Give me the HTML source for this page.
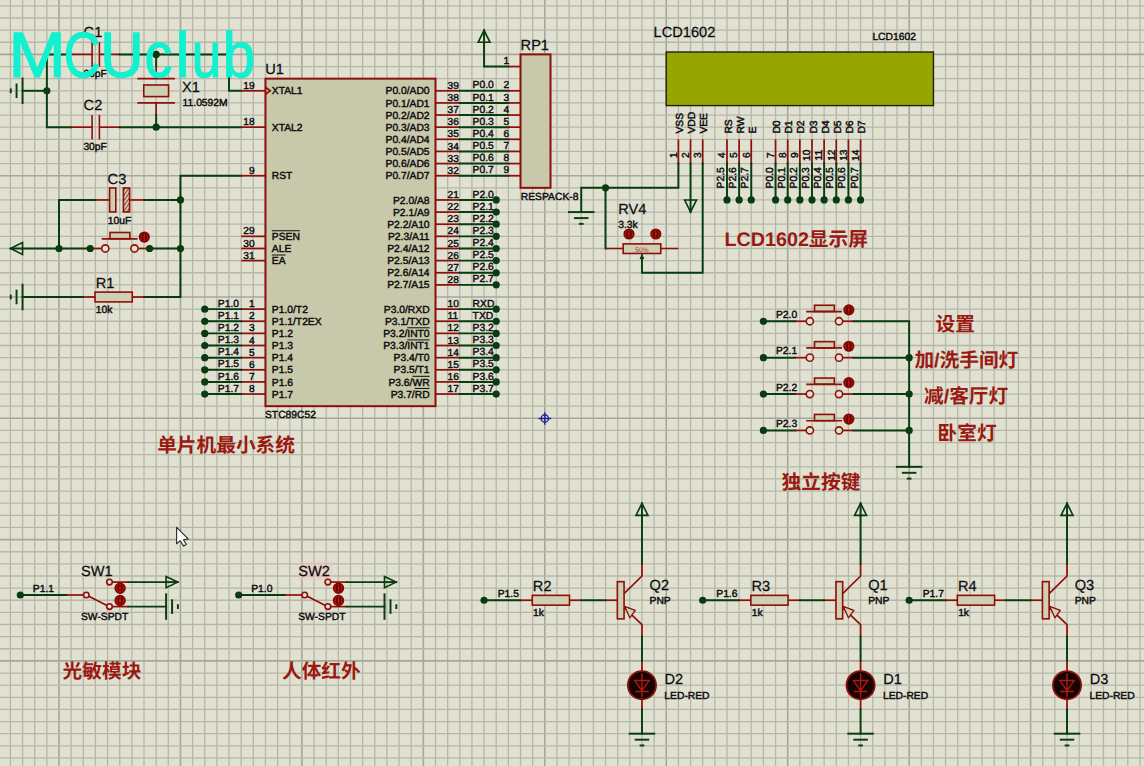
<!DOCTYPE html>
<html lang="zh"><head><meta charset="utf-8"><title>MCU schematic</title>
<style>
html,body{margin:0;padding:0;background:#E1E1D2;overflow:hidden}
svg{display:block}
text{font-family:'Liberation Sans', 'Noto Sans CJK SC', sans-serif;fill:#0c0c0c;stroke:#0c0c0c;stroke-width:.42px;text-rendering:geometricPrecision}
.gm{stroke:#B7B7A9;stroke-width:1.3}
.gM{stroke:#A6A69A;stroke-width:1.6}
.w{stroke:#063C0E;stroke-width:1.95;fill:none;stroke-linejoin:miter;stroke-linecap:square}
.p{stroke:#8E0E08;stroke-width:1.7;fill:none}
.p2{stroke:#8E0E08;stroke-width:1.6;fill:none}
.ol{stroke:#0c0c0c;stroke-width:1}
.d{fill:#0A3A10}
.b{fill:#C8C8AA;stroke:#8E0E08;stroke-width:2}
.r{fill:#CFCFB4;stroke:#8E0E08;stroke-width:1.6}
.hatch{fill:url(#hat);stroke:#8E0E08;stroke-width:1.6}
.lcd{fill:#96A500;stroke:#20200c;stroke-width:1.4}
.tri{fill:none;stroke:#063C0E;stroke-width:1.6;stroke-linejoin:miter}
.oc{fill:#E1E1D2;stroke:#8E0E08;stroke-width:1.6}
.ind{fill:#CC140A;stroke:#7a0804;stroke-width:1.8}
.indm{stroke:#560503;stroke-width:1.9;fill:none;stroke-linecap:round}
.led{fill:#160404;stroke:#8A120C;stroke-width:1.8}
.ledm{stroke:#B01A10;stroke-width:1.4;fill:none}
.ah{fill:#CFCFB4;stroke:#8E0E08;stroke-width:1.3;stroke-linejoin:round}
.hl{fill:#f0c8c0;opacity:.45}
.s{font-size:10.3px}
.n{font-size:10.2px}
.g{font-size:14.6px;stroke-width:.25px}
.pct{font-size:6.6px;fill:#b03020;stroke:none}
.c{font-size:19.7px;font-weight:bold;fill:#9A1A12;stroke:none}
.wm text{font-size:64px;fill:#12F1CF;stroke:#12F1CF;stroke-width:1.2px;vector-effect:non-scaling-stroke;stroke-linejoin:round;stroke-linecap:round}
</style></head>
<body>
<svg width="1144" height="766" viewBox="0 0 1144 766">
<defs><pattern id="hat" width="3" height="3" patternUnits="userSpaceOnUse" patternTransform="rotate(-55)"><rect width="3" height="3" fill="#CFCFB4"/><line x1="0" y1="0" x2="3" y2="0" stroke="#8E0E08" stroke-width="1.6"/></pattern></defs>
<rect width="1144" height="766" fill="#E1E1D2"/>
<g opacity="0.999">
<g id="grid"><line class="gm" x1="10.42" y1="0" x2="10.42" y2="766"/><line class="gm" x1="22.56" y1="0" x2="22.56" y2="766"/><line class="gm" x1="34.71" y1="0" x2="34.71" y2="766"/><line class="gm" x1="46.86" y1="0" x2="46.86" y2="766"/><line class="gM" x1="59" y1="0" x2="59" y2="766"/><line class="gm" x1="71.14" y1="0" x2="71.14" y2="766"/><line class="gm" x1="83.29" y1="0" x2="83.29" y2="766"/><line class="gm" x1="95.44" y1="0" x2="95.44" y2="766"/><line class="gm" x1="107.58" y1="0" x2="107.58" y2="766"/><line class="gm" x1="119.72" y1="0" x2="119.72" y2="766"/><line class="gm" x1="131.87" y1="0" x2="131.87" y2="766"/><line class="gm" x1="144.01" y1="0" x2="144.01" y2="766"/><line class="gm" x1="156.16" y1="0" x2="156.16" y2="766"/><line class="gm" x1="168.31" y1="0" x2="168.31" y2="766"/><line class="gM" x1="180.45" y1="0" x2="180.45" y2="766"/><line class="gm" x1="192.59" y1="0" x2="192.59" y2="766"/><line class="gm" x1="204.74" y1="0" x2="204.74" y2="766"/><line class="gm" x1="216.88" y1="0" x2="216.88" y2="766"/><line class="gm" x1="229.03" y1="0" x2="229.03" y2="766"/><line class="gm" x1="241.17" y1="0" x2="241.17" y2="766"/><line class="gm" x1="253.32" y1="0" x2="253.32" y2="766"/><line class="gm" x1="265.47" y1="0" x2="265.47" y2="766"/><line class="gm" x1="277.61" y1="0" x2="277.61" y2="766"/><line class="gm" x1="289.75" y1="0" x2="289.75" y2="766"/><line class="gM" x1="301.9" y1="0" x2="301.9" y2="766"/><line class="gm" x1="314.04" y1="0" x2="314.04" y2="766"/><line class="gm" x1="326.19" y1="0" x2="326.19" y2="766"/><line class="gm" x1="338.33" y1="0" x2="338.33" y2="766"/><line class="gm" x1="350.48" y1="0" x2="350.48" y2="766"/><line class="gm" x1="362.62" y1="0" x2="362.62" y2="766"/><line class="gm" x1="374.77" y1="0" x2="374.77" y2="766"/><line class="gm" x1="386.91" y1="0" x2="386.91" y2="766"/><line class="gm" x1="399.06" y1="0" x2="399.06" y2="766"/><line class="gm" x1="411.2" y1="0" x2="411.2" y2="766"/><line class="gM" x1="423.35" y1="0" x2="423.35" y2="766"/><line class="gm" x1="435.5" y1="0" x2="435.5" y2="766"/><line class="gm" x1="447.64" y1="0" x2="447.64" y2="766"/><line class="gm" x1="459.78" y1="0" x2="459.78" y2="766"/><line class="gm" x1="471.93" y1="0" x2="471.93" y2="766"/><line class="gm" x1="484.07" y1="0" x2="484.07" y2="766"/><line class="gm" x1="496.22" y1="0" x2="496.22" y2="766"/><line class="gm" x1="508.37" y1="0" x2="508.37" y2="766"/><line class="gm" x1="520.51" y1="0" x2="520.51" y2="766"/><line class="gm" x1="532.65" y1="0" x2="532.65" y2="766"/><line class="gM" x1="544.8" y1="0" x2="544.8" y2="766"/><line class="gm" x1="556.94" y1="0" x2="556.94" y2="766"/><line class="gm" x1="569.09" y1="0" x2="569.09" y2="766"/><line class="gm" x1="581.24" y1="0" x2="581.24" y2="766"/><line class="gm" x1="593.38" y1="0" x2="593.38" y2="766"/><line class="gm" x1="605.52" y1="0" x2="605.52" y2="766"/><line class="gm" x1="617.67" y1="0" x2="617.67" y2="766"/><line class="gm" x1="629.81" y1="0" x2="629.81" y2="766"/><line class="gm" x1="641.96" y1="0" x2="641.96" y2="766"/><line class="gm" x1="654.11" y1="0" x2="654.11" y2="766"/><line class="gM" x1="666.25" y1="0" x2="666.25" y2="766"/><line class="gm" x1="678.39" y1="0" x2="678.39" y2="766"/><line class="gm" x1="690.54" y1="0" x2="690.54" y2="766"/><line class="gm" x1="702.68" y1="0" x2="702.68" y2="766"/><line class="gm" x1="714.83" y1="0" x2="714.83" y2="766"/><line class="gm" x1="726.98" y1="0" x2="726.98" y2="766"/><line class="gm" x1="739.12" y1="0" x2="739.12" y2="766"/><line class="gm" x1="751.26" y1="0" x2="751.26" y2="766"/><line class="gm" x1="763.41" y1="0" x2="763.41" y2="766"/><line class="gm" x1="775.55" y1="0" x2="775.55" y2="766"/><line class="gM" x1="787.7" y1="0" x2="787.7" y2="766"/><line class="gm" x1="799.85" y1="0" x2="799.85" y2="766"/><line class="gm" x1="811.99" y1="0" x2="811.99" y2="766"/><line class="gm" x1="824.13" y1="0" x2="824.13" y2="766"/><line class="gm" x1="836.28" y1="0" x2="836.28" y2="766"/><line class="gm" x1="848.42" y1="0" x2="848.42" y2="766"/><line class="gm" x1="860.57" y1="0" x2="860.57" y2="766"/><line class="gm" x1="872.71" y1="0" x2="872.71" y2="766"/><line class="gm" x1="884.86" y1="0" x2="884.86" y2="766"/><line class="gm" x1="897" y1="0" x2="897" y2="766"/><line class="gM" x1="909.15" y1="0" x2="909.15" y2="766"/><line class="gm" x1="921.29" y1="0" x2="921.29" y2="766"/><line class="gm" x1="933.44" y1="0" x2="933.44" y2="766"/><line class="gm" x1="945.58" y1="0" x2="945.58" y2="766"/><line class="gm" x1="957.73" y1="0" x2="957.73" y2="766"/><line class="gm" x1="969.88" y1="0" x2="969.88" y2="766"/><line class="gm" x1="982.02" y1="0" x2="982.02" y2="766"/><line class="gm" x1="994.16" y1="0" x2="994.16" y2="766"/><line class="gm" x1="1006.31" y1="0" x2="1006.31" y2="766"/><line class="gm" x1="1018.45" y1="0" x2="1018.45" y2="766"/><line class="gM" x1="1030.6" y1="0" x2="1030.6" y2="766"/><line class="gm" x1="1042.74" y1="0" x2="1042.74" y2="766"/><line class="gm" x1="1054.89" y1="0" x2="1054.89" y2="766"/><line class="gm" x1="1067.03" y1="0" x2="1067.03" y2="766"/><line class="gm" x1="1079.18" y1="0" x2="1079.18" y2="766"/><line class="gm" x1="1091.33" y1="0" x2="1091.33" y2="766"/><line class="gm" x1="1103.47" y1="0" x2="1103.47" y2="766"/><line class="gm" x1="1115.62" y1="0" x2="1115.62" y2="766"/><line class="gm" x1="1127.76" y1="0" x2="1127.76" y2="766"/><line class="gm" x1="1139.9" y1="0" x2="1139.9" y2="766"/><line class="gm" x1="0" y1="5.88" x2="1144" y2="5.88"/><line class="gm" x1="0" y1="18.01" x2="1144" y2="18.01"/><line class="gm" x1="0" y1="30.14" x2="1144" y2="30.14"/><line class="gm" x1="0" y1="42.27" x2="1144" y2="42.27"/><line class="gM" x1="0" y1="54.4" x2="1144" y2="54.4"/><line class="gm" x1="0" y1="66.53" x2="1144" y2="66.53"/><line class="gm" x1="0" y1="78.66" x2="1144" y2="78.66"/><line class="gm" x1="0" y1="90.79" x2="1144" y2="90.79"/><line class="gm" x1="0" y1="102.92" x2="1144" y2="102.92"/><line class="gm" x1="0" y1="115.05" x2="1144" y2="115.05"/><line class="gm" x1="0" y1="127.18" x2="1144" y2="127.18"/><line class="gm" x1="0" y1="139.31" x2="1144" y2="139.31"/><line class="gm" x1="0" y1="151.44" x2="1144" y2="151.44"/><line class="gm" x1="0" y1="163.57" x2="1144" y2="163.57"/><line class="gM" x1="0" y1="175.7" x2="1144" y2="175.7"/><line class="gm" x1="0" y1="187.83" x2="1144" y2="187.83"/><line class="gm" x1="0" y1="199.96" x2="1144" y2="199.96"/><line class="gm" x1="0" y1="212.09" x2="1144" y2="212.09"/><line class="gm" x1="0" y1="224.22" x2="1144" y2="224.22"/><line class="gm" x1="0" y1="236.35" x2="1144" y2="236.35"/><line class="gm" x1="0" y1="248.48" x2="1144" y2="248.48"/><line class="gm" x1="0" y1="260.61" x2="1144" y2="260.61"/><line class="gm" x1="0" y1="272.74" x2="1144" y2="272.74"/><line class="gm" x1="0" y1="284.87" x2="1144" y2="284.87"/><line class="gM" x1="0" y1="297" x2="1144" y2="297"/><line class="gm" x1="0" y1="309.13" x2="1144" y2="309.13"/><line class="gm" x1="0" y1="321.26" x2="1144" y2="321.26"/><line class="gm" x1="0" y1="333.39" x2="1144" y2="333.39"/><line class="gm" x1="0" y1="345.52" x2="1144" y2="345.52"/><line class="gm" x1="0" y1="357.65" x2="1144" y2="357.65"/><line class="gm" x1="0" y1="369.78" x2="1144" y2="369.78"/><line class="gm" x1="0" y1="381.91" x2="1144" y2="381.91"/><line class="gm" x1="0" y1="394.04" x2="1144" y2="394.04"/><line class="gm" x1="0" y1="406.17" x2="1144" y2="406.17"/><line class="gM" x1="0" y1="418.3" x2="1144" y2="418.3"/><line class="gm" x1="0" y1="430.43" x2="1144" y2="430.43"/><line class="gm" x1="0" y1="442.56" x2="1144" y2="442.56"/><line class="gm" x1="0" y1="454.69" x2="1144" y2="454.69"/><line class="gm" x1="0" y1="466.82" x2="1144" y2="466.82"/><line class="gm" x1="0" y1="478.95" x2="1144" y2="478.95"/><line class="gm" x1="0" y1="491.08" x2="1144" y2="491.08"/><line class="gm" x1="0" y1="503.21" x2="1144" y2="503.21"/><line class="gm" x1="0" y1="515.34" x2="1144" y2="515.34"/><line class="gm" x1="0" y1="527.47" x2="1144" y2="527.47"/><line class="gM" x1="0" y1="539.6" x2="1144" y2="539.6"/><line class="gm" x1="0" y1="551.73" x2="1144" y2="551.73"/><line class="gm" x1="0" y1="563.86" x2="1144" y2="563.86"/><line class="gm" x1="0" y1="575.99" x2="1144" y2="575.99"/><line class="gm" x1="0" y1="588.12" x2="1144" y2="588.12"/><line class="gm" x1="0" y1="600.25" x2="1144" y2="600.25"/><line class="gm" x1="0" y1="612.38" x2="1144" y2="612.38"/><line class="gm" x1="0" y1="624.51" x2="1144" y2="624.51"/><line class="gm" x1="0" y1="636.64" x2="1144" y2="636.64"/><line class="gm" x1="0" y1="648.77" x2="1144" y2="648.77"/><line class="gM" x1="0" y1="660.9" x2="1144" y2="660.9"/><line class="gm" x1="0" y1="673.03" x2="1144" y2="673.03"/><line class="gm" x1="0" y1="685.16" x2="1144" y2="685.16"/><line class="gm" x1="0" y1="697.29" x2="1144" y2="697.29"/><line class="gm" x1="0" y1="709.42" x2="1144" y2="709.42"/><line class="gm" x1="0" y1="721.55" x2="1144" y2="721.55"/><line class="gm" x1="0" y1="733.68" x2="1144" y2="733.68"/><line class="gm" x1="0" y1="745.81" x2="1144" y2="745.81"/><line class="gm" x1="0" y1="757.94" x2="1144" y2="757.94"/></g>
<polyline class="w" points="71.14,54.4 46.86,54.4 46.86,127.18 71.14,127.18"/>
<polyline class="p" points="71.14,54.4 92.1,54.4"/>
<polyline class="p" points="99.4,54.4 119.72,54.4"/>
<line class="p2" x1="92.1" y1="42.1" x2="92.1" y2="66.7"/>
<line class="p2" x1="99.4" y1="42.1" x2="99.4" y2="66.7"/>
<text class="g" x="83.6" y="37.4">C1</text>
<text class="s" x="83.4" y="77">30pF</text>
<polyline class="p" points="71.14,127.18 92.1,127.18"/>
<polyline class="p" points="99.4,127.18 119.72,127.18"/>
<line class="p2" x1="92.1" y1="114.88" x2="92.1" y2="139.48"/>
<line class="p2" x1="99.4" y1="114.88" x2="99.4" y2="139.48"/>
<text class="g" x="83.6" y="110.18">C2</text>
<text class="s" x="83.4" y="149.78">30pF</text>
<polyline class="w" points="119.72,54.4 229.03,54.4 229.03,90.79 241.17,90.79"/>
<polyline class="w" points="119.72,127.18 241.17,127.18"/>
<polyline class="w" points="156.16,54.4 156.16,66.53"/>
<polyline class="p" points="156.16,66.53 156.16,78.66"/>
<polyline class="p" points="156.16,102.92 156.16,115.05"/>
<polyline class="w" points="156.16,115.05 156.16,127.18"/>
<line class="p" x1="137.36" y1="78.66" x2="174.96" y2="78.66"/>
<line class="p" x1="137.36" y1="102.92" x2="174.96" y2="102.92"/>
<rect class="r" x="143.76" y="84.99" width="24.8" height="11.6"/>
<text class="g" x="182" y="91.8">X1</text>
<text class="s" x="182.6" y="105.8">11.0592M</text>
<circle class="d" cx="156.16" cy="54.4" r="3.6"/>
<circle class="d" cx="156.16" cy="127.18" r="3.6"/>
<polyline class="w" points="46.86,90.79 22.56,90.79"/>
<circle class="d" cx="46.86" cy="90.79" r="3.6"/>
<line class="w" x1="22.56" y1="78.49" x2="22.56" y2="103.09"/>
<line class="w" x1="16.56" y1="84.49" x2="16.56" y2="97.09"/>
<line class="w" x1="10.76" y1="89.39" x2="10.76" y2="92.19"/>
<polyline class="w" points="241.17,175.7 180.45,175.7 180.45,297 144.01,297"/>
<polyline class="w" points="144.01,199.96 180.45,199.96"/>
<polyline class="w" points="95.44,199.96 59,199.96 59,248.48"/>
<polyline class="p" points="95.44,199.96 109.6,199.96"/>
<polyline class="p" points="129.6,199.96 144.01,199.96"/>
<rect class="r" x="109.6" y="187.96" width="6.2" height="24"/>
<rect class="hatch" x="123.4" y="187.96" width="6.2" height="24"/>
<text class="g" x="107.6" y="183.8">C3</text>
<text class="s" x="107.8" y="224">10uF</text>
<polygon class="tri" points="22.56,242.48 10.56,248.48 22.56,254.48"/>
<line class="w" x1="22.56" y1="248.48" x2="10.56" y2="248.48"/>
<polyline class="w" points="22.56,248.48 90.2,248.48"/>
<polyline class="w" points="149.6,248.48 180.45,248.48"/>
<polyline class="p" points="90.2,248.48 101.6,248.48"/>
<polyline class="p" points="138.2,248.48 149.6,248.48"/>
<circle class="oc" cx="105.3" cy="248.48" r="3.6"/>
<circle class="oc" cx="134.5" cy="248.48" r="3.6"/>
<rect class="r" x="110" y="232.48" width="19.8" height="6.2"/>
<line class="p" x1="101.7" y1="238.78" x2="137.5" y2="238.78"/>
<circle class="ind" cx="144.3" cy="237.08" r="4.7"/>
<path class="indm" d="M143 234.58 q-1.5 2.5 0 5 M145.6 234.58 q1.5 2.5 0 5"/>
<circle class="d" cx="59" cy="248.48" r="3.6"/>
<circle class="d" cx="90.2" cy="248.48" r="3.6"/>
<circle class="d" cx="149.6" cy="248.48" r="3.6"/>
<circle class="d" cx="180.45" cy="248.48" r="3.6"/>
<circle class="d" cx="180.45" cy="199.96" r="3.6"/>
<polyline class="w" points="22.56,297 83.29,297"/>
<line class="w" x1="22.56" y1="284.7" x2="22.56" y2="309.3"/>
<line class="w" x1="16.56" y1="290.7" x2="16.56" y2="303.3"/>
<line class="w" x1="10.76" y1="295.6" x2="10.76" y2="298.4"/>
<polyline class="p" points="83.29,297 95.05,297"/>
<polyline class="p" points="132.25,297 144.01,297"/>
<rect class="r" x="95.05" y="292.1" width="37.2" height="9.8"/>
<text class="g" x="95.65" y="287.7">R1</text>
<text class="s" x="95.85" y="313">10k</text>
<rect class="b" x="265.47" y="78.66" width="170.03" height="327.51"/>
<text class="g" x="265.2" y="73.8">U1</text>
<text class="s" x="265" y="417.6">STC89C52</text>
<polyline class="p" points="241.17,90.79 265.47,90.79"/>
<text class="n" x="254.6" y="88.89" text-anchor="end">19</text>
<text class="s" x="271.8" y="94.39">XTAL1</text>
<polyline class="p" points="241.17,127.18 265.47,127.18"/>
<text class="n" x="254.6" y="125.28" text-anchor="end">18</text>
<text class="s" x="271.8" y="130.78">XTAL2</text>
<polyline class="p" points="241.17,175.7 265.47,175.7"/>
<text class="n" x="254.6" y="173.8" text-anchor="end">9</text>
<text class="s" x="271.8" y="179.3">RST</text>
<polyline class="p" points="241.17,236.35 265.47,236.35"/>
<text class="n" x="254.6" y="234.45" text-anchor="end">29</text>
<text class="s" x="271.8" y="239.95">PSEN</text>
<line class="ol" x1="271.8" y1="230.75" x2="299.85" y2="230.75"/>
<polyline class="p" points="241.17,248.48 265.47,248.48"/>
<text class="n" x="254.6" y="246.58" text-anchor="end">30</text>
<text class="s" x="271.8" y="252.08">ALE</text>
<polyline class="p" points="241.17,260.61 265.47,260.61"/>
<text class="n" x="254.6" y="258.71" text-anchor="end">31</text>
<text class="s" x="271.8" y="264.21">EA</text>
<line class="ol" x1="271.8" y1="255.01" x2="285.54" y2="255.01"/>
<polyline class="p" points="241.17,309.13 265.47,309.13"/>
<text class="n" x="254.6" y="307.23" text-anchor="end">1</text>
<text class="s" x="271.8" y="312.73">P1.0/T2</text>
<polyline class="p" points="241.17,321.26 265.47,321.26"/>
<text class="n" x="254.6" y="319.36" text-anchor="end">2</text>
<text class="s" x="271.8" y="324.86">P1.1/T2EX</text>
<polyline class="p" points="241.17,333.39 265.47,333.39"/>
<text class="n" x="254.6" y="331.49" text-anchor="end">3</text>
<text class="s" x="271.8" y="336.99">P1.2</text>
<polyline class="p" points="241.17,345.52 265.47,345.52"/>
<text class="n" x="254.6" y="343.62" text-anchor="end">4</text>
<text class="s" x="271.8" y="349.12">P1.3</text>
<polyline class="p" points="241.17,357.65 265.47,357.65"/>
<text class="n" x="254.6" y="355.75" text-anchor="end">5</text>
<text class="s" x="271.8" y="361.25">P1.4</text>
<polyline class="p" points="241.17,369.78 265.47,369.78"/>
<text class="n" x="254.6" y="367.88" text-anchor="end">6</text>
<text class="s" x="271.8" y="373.38">P1.5</text>
<polyline class="p" points="241.17,381.91 265.47,381.91"/>
<text class="n" x="254.6" y="380.01" text-anchor="end">7</text>
<text class="s" x="271.8" y="385.51">P1.6</text>
<polyline class="p" points="241.17,394.04 265.47,394.04"/>
<text class="n" x="254.6" y="392.14" text-anchor="end">8</text>
<text class="s" x="271.8" y="397.64">P1.7</text>
<polyline class="p" fill="none" points="265.47,87.29 270.27,90.79 265.47,94.29"/>
<polyline class="p" points="435.5,90.79 459.78,90.79"/>
<text class="n" x="447.6" y="88.89">39</text>
<text class="s" x="429.6" y="94.39" text-anchor="end">P0.0/AD0</text>
<text class="s" x="472.6" y="88.39">P0.0</text>
<polyline class="w" points="459.78,90.79 508.37,90.79"/>
<polyline class="p" points="508.37,90.79 520.51,90.79"/>
<text class="n" x="503.4" y="88.39">2</text>
<polyline class="p" points="435.5,102.92 459.78,102.92"/>
<text class="n" x="447.6" y="101.02">38</text>
<text class="s" x="429.6" y="106.52" text-anchor="end">P0.1/AD1</text>
<text class="s" x="472.6" y="100.52">P0.1</text>
<polyline class="w" points="459.78,102.92 508.37,102.92"/>
<polyline class="p" points="508.37,102.92 520.51,102.92"/>
<text class="n" x="503.4" y="100.52">3</text>
<polyline class="p" points="435.5,115.05 459.78,115.05"/>
<text class="n" x="447.6" y="113.15">37</text>
<text class="s" x="429.6" y="118.65" text-anchor="end">P0.2/AD2</text>
<text class="s" x="472.6" y="112.65">P0.2</text>
<polyline class="w" points="459.78,115.05 508.37,115.05"/>
<polyline class="p" points="508.37,115.05 520.51,115.05"/>
<text class="n" x="503.4" y="112.65">4</text>
<polyline class="p" points="435.5,127.18 459.78,127.18"/>
<text class="n" x="447.6" y="125.28">36</text>
<text class="s" x="429.6" y="130.78" text-anchor="end">P0.3/AD3</text>
<text class="s" x="472.6" y="124.78">P0.3</text>
<polyline class="w" points="459.78,127.18 508.37,127.18"/>
<polyline class="p" points="508.37,127.18 520.51,127.18"/>
<text class="n" x="503.4" y="124.78">5</text>
<polyline class="p" points="435.5,139.31 459.78,139.31"/>
<text class="n" x="447.6" y="137.41">35</text>
<text class="s" x="429.6" y="142.91" text-anchor="end">P0.4/AD4</text>
<text class="s" x="472.6" y="136.91">P0.4</text>
<polyline class="w" points="459.78,139.31 508.37,139.31"/>
<polyline class="p" points="508.37,139.31 520.51,139.31"/>
<text class="n" x="503.4" y="136.91">6</text>
<polyline class="p" points="435.5,151.44 459.78,151.44"/>
<text class="n" x="447.6" y="149.54">34</text>
<text class="s" x="429.6" y="155.04" text-anchor="end">P0.5/AD5</text>
<text class="s" x="472.6" y="149.04">P0.5</text>
<polyline class="w" points="459.78,151.44 508.37,151.44"/>
<polyline class="p" points="508.37,151.44 520.51,151.44"/>
<text class="n" x="503.4" y="149.04">7</text>
<polyline class="p" points="435.5,163.57 459.78,163.57"/>
<text class="n" x="447.6" y="161.67">33</text>
<text class="s" x="429.6" y="167.17" text-anchor="end">P0.6/AD6</text>
<text class="s" x="472.6" y="161.17">P0.6</text>
<polyline class="w" points="459.78,163.57 508.37,163.57"/>
<polyline class="p" points="508.37,163.57 520.51,163.57"/>
<text class="n" x="503.4" y="161.17">8</text>
<polyline class="p" points="435.5,175.7 459.78,175.7"/>
<text class="n" x="447.6" y="173.8">32</text>
<text class="s" x="429.6" y="179.3" text-anchor="end">P0.7/AD7</text>
<text class="s" x="472.6" y="173.3">P0.7</text>
<polyline class="w" points="459.78,175.7 508.37,175.7"/>
<polyline class="p" points="508.37,175.7 520.51,175.7"/>
<text class="n" x="503.4" y="173.3">9</text>
<polyline class="p" points="435.5,199.96 459.78,199.96"/>
<text class="n" x="447.6" y="198.06">21</text>
<text class="s" x="429.6" y="203.56" text-anchor="end">P2.0/A8</text>
<text class="s" x="472.6" y="197.56">P2.0</text>
<polyline class="w" points="459.78,199.96 496.22,199.96"/>
<circle class="d" cx="496.22" cy="199.96" r="3.6"/>
<polyline class="p" points="435.5,212.09 459.78,212.09"/>
<text class="n" x="447.6" y="210.19">22</text>
<text class="s" x="429.6" y="215.69" text-anchor="end">P2.1/A9</text>
<text class="s" x="472.6" y="209.69">P2.1</text>
<polyline class="w" points="459.78,212.09 496.22,212.09"/>
<circle class="d" cx="496.22" cy="212.09" r="3.6"/>
<polyline class="p" points="435.5,224.22 459.78,224.22"/>
<text class="n" x="447.6" y="222.32">23</text>
<text class="s" x="429.6" y="227.82" text-anchor="end">P2.2/A10</text>
<text class="s" x="472.6" y="221.82">P2.2</text>
<polyline class="w" points="459.78,224.22 496.22,224.22"/>
<circle class="d" cx="496.22" cy="224.22" r="3.6"/>
<polyline class="p" points="435.5,236.35 459.78,236.35"/>
<text class="n" x="447.6" y="234.45">24</text>
<text class="s" x="429.6" y="239.95" text-anchor="end">P2.3/A11</text>
<text class="s" x="472.6" y="233.95">P2.3</text>
<polyline class="w" points="459.78,236.35 496.22,236.35"/>
<circle class="d" cx="496.22" cy="236.35" r="3.6"/>
<polyline class="p" points="435.5,248.48 459.78,248.48"/>
<text class="n" x="447.6" y="246.58">25</text>
<text class="s" x="429.6" y="252.08" text-anchor="end">P2.4/A12</text>
<text class="s" x="472.6" y="246.08">P2.4</text>
<polyline class="w" points="459.78,248.48 496.22,248.48"/>
<circle class="d" cx="496.22" cy="248.48" r="3.6"/>
<polyline class="p" points="435.5,260.61 459.78,260.61"/>
<text class="n" x="447.6" y="258.71">26</text>
<text class="s" x="429.6" y="264.21" text-anchor="end">P2.5/A13</text>
<text class="s" x="472.6" y="258.21">P2.5</text>
<polyline class="w" points="459.78,260.61 496.22,260.61"/>
<circle class="d" cx="496.22" cy="260.61" r="3.6"/>
<polyline class="p" points="435.5,272.74 459.78,272.74"/>
<text class="n" x="447.6" y="270.84">27</text>
<text class="s" x="429.6" y="276.34" text-anchor="end">P2.6/A14</text>
<text class="s" x="472.6" y="270.34">P2.6</text>
<polyline class="w" points="459.78,272.74 496.22,272.74"/>
<circle class="d" cx="496.22" cy="272.74" r="3.6"/>
<polyline class="p" points="435.5,284.87 459.78,284.87"/>
<text class="n" x="447.6" y="282.97">28</text>
<text class="s" x="429.6" y="288.47" text-anchor="end">P2.7/A15</text>
<text class="s" x="472.6" y="282.47">P2.7</text>
<polyline class="w" points="459.78,284.87 496.22,284.87"/>
<circle class="d" cx="496.22" cy="284.87" r="3.6"/>
<polyline class="p" points="435.5,309.13 459.78,309.13"/>
<text class="n" x="447.6" y="307.23">10</text>
<text class="s" x="429.6" y="312.73" text-anchor="end">P3.0/RXD</text>
<text class="s" x="472.6" y="306.73">RXD</text>
<polyline class="w" points="459.78,309.13 496.22,309.13"/>
<circle class="d" cx="496.22" cy="309.13" r="3.6"/>
<polyline class="p" points="435.5,321.26 459.78,321.26"/>
<text class="n" x="447.6" y="319.36">11</text>
<text class="s" x="429.6" y="324.86" text-anchor="end">P3.1/TXD</text>
<text class="s" x="472.6" y="318.86">TXD</text>
<polyline class="w" points="459.78,321.26 496.22,321.26"/>
<circle class="d" cx="496.22" cy="321.26" r="3.6"/>
<polyline class="p" points="435.5,333.39 459.78,333.39"/>
<text class="n" x="447.6" y="331.49">12</text>
<text class="s" x="429.6" y="336.99" text-anchor="end">P3.2/INT0</text>
<line class="ol" x1="407.28" y1="327.79" x2="429.6" y2="327.79"/>
<text class="s" x="472.6" y="330.99">P3.2</text>
<polyline class="w" points="459.78,333.39 496.22,333.39"/>
<circle class="d" cx="496.22" cy="333.39" r="3.6"/>
<polyline class="p" points="435.5,345.52 459.78,345.52"/>
<text class="n" x="447.6" y="343.62">13</text>
<text class="s" x="429.6" y="349.12" text-anchor="end">P3.3/INT1</text>
<line class="ol" x1="407.28" y1="339.92" x2="429.6" y2="339.92"/>
<text class="s" x="472.6" y="343.12">P3.3</text>
<polyline class="w" points="459.78,345.52 496.22,345.52"/>
<circle class="d" cx="496.22" cy="345.52" r="3.6"/>
<polyline class="p" points="435.5,357.65 459.78,357.65"/>
<text class="n" x="447.6" y="355.75">14</text>
<text class="s" x="429.6" y="361.25" text-anchor="end">P3.4/T0</text>
<text class="s" x="472.6" y="355.25">P3.4</text>
<polyline class="w" points="459.78,357.65 496.22,357.65"/>
<circle class="d" cx="496.22" cy="357.65" r="3.6"/>
<polyline class="p" points="435.5,369.78 459.78,369.78"/>
<text class="n" x="447.6" y="367.88">15</text>
<text class="s" x="429.6" y="373.38" text-anchor="end">P3.5/T1</text>
<text class="s" x="472.6" y="367.38">P3.5</text>
<polyline class="w" points="459.78,369.78 496.22,369.78"/>
<circle class="d" cx="496.22" cy="369.78" r="3.6"/>
<polyline class="p" points="435.5,381.91 459.78,381.91"/>
<text class="n" x="447.6" y="380.01">16</text>
<text class="s" x="429.6" y="385.51" text-anchor="end">P3.6/WR</text>
<line class="ol" x1="412.44" y1="376.31" x2="429.6" y2="376.31"/>
<text class="s" x="472.6" y="379.51">P3.6</text>
<polyline class="w" points="459.78,381.91 496.22,381.91"/>
<circle class="d" cx="496.22" cy="381.91" r="3.6"/>
<polyline class="p" points="435.5,394.04 459.78,394.04"/>
<text class="n" x="447.6" y="392.14">17</text>
<text class="s" x="429.6" y="397.64" text-anchor="end">P3.7/RD</text>
<line class="ol" x1="414.72" y1="388.44" x2="429.6" y2="388.44"/>
<text class="s" x="472.6" y="391.64">P3.7</text>
<polyline class="w" points="459.78,394.04 496.22,394.04"/>
<circle class="d" cx="496.22" cy="394.04" r="3.6"/>
<polyline class="w" points="204.74,309.13 241.17,309.13"/>
<circle class="d" cx="204.74" cy="309.13" r="3.6"/>
<text class="s" x="217.8" y="306.73">P1.0</text>
<polyline class="w" points="204.74,321.26 241.17,321.26"/>
<circle class="d" cx="204.74" cy="321.26" r="3.6"/>
<text class="s" x="217.8" y="318.86">P1.1</text>
<polyline class="w" points="204.74,333.39 241.17,333.39"/>
<circle class="d" cx="204.74" cy="333.39" r="3.6"/>
<text class="s" x="217.8" y="330.99">P1.2</text>
<polyline class="w" points="204.74,345.52 241.17,345.52"/>
<circle class="d" cx="204.74" cy="345.52" r="3.6"/>
<text class="s" x="217.8" y="343.12">P1.3</text>
<polyline class="w" points="204.74,357.65 241.17,357.65"/>
<circle class="d" cx="204.74" cy="357.65" r="3.6"/>
<text class="s" x="217.8" y="355.25">P1.4</text>
<polyline class="w" points="204.74,369.78 241.17,369.78"/>
<circle class="d" cx="204.74" cy="369.78" r="3.6"/>
<text class="s" x="217.8" y="367.38">P1.5</text>
<polyline class="w" points="204.74,381.91 241.17,381.91"/>
<circle class="d" cx="204.74" cy="381.91" r="3.6"/>
<text class="s" x="217.8" y="379.51">P1.6</text>
<polyline class="w" points="204.74,394.04 241.17,394.04"/>
<circle class="d" cx="204.74" cy="394.04" r="3.6"/>
<text class="s" x="217.8" y="391.64">P1.7</text>
<rect class="b" x="520.51" y="54.4" width="30" height="133.43"/>
<text class="g" x="520.6" y="50.2">RP1</text>
<text class="s" x="520.8" y="200">RESPACK-8</text>
<polyline class="p" points="508.37,66.53 520.51,66.53"/>
<text class="n" x="503.4" y="64.13">1</text>
<polyline class="w" points="508.37,66.53 484.07,66.53 484.07,42.27"/>
<polygon class="tri" points="478.07,42.27 484.07,30.27 490.07,42.27"/>
<line class="w" x1="484.07" y1="42.27" x2="484.07" y2="30.27"/>
<rect class="lcd" x="666.25" y="52" width="267.19" height="53.6"/>
<text class="g" x="653.6" y="36.8">LCD1602</text>
<text class="s" x="872.4" y="40.2">LCD1602</text>
<polyline class="p" points="678.39,139.31 678.39,164.47"/>
<text class="s" x="683" y="133.6" transform="rotate(-90 683 133.6)">VSS</text>
<text class="n" x="676.69" y="155.2" text-anchor="middle" transform="rotate(-90 676.69 155.2)">1</text>
<polyline class="p" points="690.54,139.31 690.54,164.47"/>
<text class="s" x="695.14" y="133.6" transform="rotate(-90 695.14 133.6)">VDD</text>
<text class="n" x="688.84" y="155.2" text-anchor="middle" transform="rotate(-90 688.84 155.2)">2</text>
<polyline class="p" points="702.68,139.31 702.68,164.47"/>
<text class="s" x="707.28" y="133.6" transform="rotate(-90 707.28 133.6)">VEE</text>
<text class="n" x="700.98" y="155.2" text-anchor="middle" transform="rotate(-90 700.98 155.2)">3</text>
<polyline class="p" points="726.98,139.31 726.98,164.47"/>
<text class="s" x="731.58" y="133.6" transform="rotate(-90 731.58 133.6)">RS</text>
<text class="n" x="725.27" y="155.2" text-anchor="middle" transform="rotate(-90 725.27 155.2)">4</text>
<polyline class="w" points="726.98,163.57 726.98,199.96"/>
<circle class="d" cx="726.98" cy="199.96" r="3.6"/>
<text class="s" x="723.98" y="188.4" transform="rotate(-90 723.98 188.4)">P2.5</text>
<polyline class="p" points="739.12,139.31 739.12,164.47"/>
<text class="s" x="743.72" y="133.6" transform="rotate(-90 743.72 133.6)">RW</text>
<text class="n" x="737.42" y="155.2" text-anchor="middle" transform="rotate(-90 737.42 155.2)">5</text>
<polyline class="w" points="739.12,163.57 739.12,199.96"/>
<circle class="d" cx="739.12" cy="199.96" r="3.6"/>
<text class="s" x="736.12" y="188.4" transform="rotate(-90 736.12 188.4)">P2.6</text>
<polyline class="p" points="751.26,139.31 751.26,164.47"/>
<text class="s" x="755.87" y="133.6" transform="rotate(-90 755.87 133.6)">E</text>
<text class="n" x="749.56" y="155.2" text-anchor="middle" transform="rotate(-90 749.56 155.2)">6</text>
<polyline class="w" points="751.26,163.57 751.26,199.96"/>
<circle class="d" cx="751.26" cy="199.96" r="3.6"/>
<text class="s" x="748.26" y="188.4" transform="rotate(-90 748.26 188.4)">P2.7</text>
<polyline class="p" points="775.55,139.31 775.55,164.47"/>
<text class="s" x="780.15" y="133.6" transform="rotate(-90 780.15 133.6)">D0</text>
<text class="n" x="773.85" y="155.2" text-anchor="middle" transform="rotate(-90 773.85 155.2)">7</text>
<polyline class="w" points="775.55,163.57 775.55,199.96"/>
<circle class="d" cx="775.55" cy="199.96" r="3.6"/>
<text class="s" x="772.55" y="188.4" transform="rotate(-90 772.55 188.4)">P0.0</text>
<polyline class="p" points="787.7,139.31 787.7,164.47"/>
<text class="s" x="792.3" y="133.6" transform="rotate(-90 792.3 133.6)">D1</text>
<text class="n" x="786" y="155.2" text-anchor="middle" transform="rotate(-90 786 155.2)">8</text>
<polyline class="w" points="787.7,163.57 787.7,199.96"/>
<circle class="d" cx="787.7" cy="199.96" r="3.6"/>
<text class="s" x="784.7" y="188.4" transform="rotate(-90 784.7 188.4)">P0.1</text>
<polyline class="p" points="799.85,139.31 799.85,164.47"/>
<text class="s" x="804.45" y="133.6" transform="rotate(-90 804.45 133.6)">D2</text>
<text class="n" x="798.14" y="155.2" text-anchor="middle" transform="rotate(-90 798.14 155.2)">9</text>
<polyline class="w" points="799.85,163.57 799.85,199.96"/>
<circle class="d" cx="799.85" cy="199.96" r="3.6"/>
<text class="s" x="796.85" y="188.4" transform="rotate(-90 796.85 188.4)">P0.2</text>
<polyline class="p" points="811.99,139.31 811.99,164.47"/>
<text class="s" x="816.59" y="133.6" transform="rotate(-90 816.59 133.6)">D3</text>
<text class="n" x="810.29" y="155.2" text-anchor="middle" transform="rotate(-90 810.29 155.2)">10</text>
<polyline class="w" points="811.99,163.57 811.99,199.96"/>
<circle class="d" cx="811.99" cy="199.96" r="3.6"/>
<text class="s" x="808.99" y="188.4" transform="rotate(-90 808.99 188.4)">P0.3</text>
<polyline class="p" points="824.13,139.31 824.13,164.47"/>
<text class="s" x="828.74" y="133.6" transform="rotate(-90 828.74 133.6)">D4</text>
<text class="n" x="822.43" y="155.2" text-anchor="middle" transform="rotate(-90 822.43 155.2)">11</text>
<polyline class="w" points="824.13,163.57 824.13,199.96"/>
<circle class="d" cx="824.13" cy="199.96" r="3.6"/>
<text class="s" x="821.13" y="188.4" transform="rotate(-90 821.13 188.4)">P0.4</text>
<polyline class="p" points="836.28,139.31 836.28,164.47"/>
<text class="s" x="840.88" y="133.6" transform="rotate(-90 840.88 133.6)">D5</text>
<text class="n" x="834.58" y="155.2" text-anchor="middle" transform="rotate(-90 834.58 155.2)">12</text>
<polyline class="w" points="836.28,163.57 836.28,199.96"/>
<circle class="d" cx="836.28" cy="199.96" r="3.6"/>
<text class="s" x="833.28" y="188.4" transform="rotate(-90 833.28 188.4)">P0.5</text>
<polyline class="p" points="848.42,139.31 848.42,164.47"/>
<text class="s" x="853.02" y="133.6" transform="rotate(-90 853.02 133.6)">D6</text>
<text class="n" x="846.72" y="155.2" text-anchor="middle" transform="rotate(-90 846.72 155.2)">13</text>
<polyline class="w" points="848.42,163.57 848.42,199.96"/>
<circle class="d" cx="848.42" cy="199.96" r="3.6"/>
<text class="s" x="845.42" y="188.4" transform="rotate(-90 845.42 188.4)">P0.6</text>
<polyline class="p" points="860.57,139.31 860.57,164.47"/>
<text class="s" x="865.17" y="133.6" transform="rotate(-90 865.17 133.6)">D7</text>
<text class="n" x="858.87" y="155.2" text-anchor="middle" transform="rotate(-90 858.87 155.2)">14</text>
<polyline class="w" points="860.57,163.57 860.57,199.96"/>
<circle class="d" cx="860.57" cy="199.96" r="3.6"/>
<text class="s" x="857.57" y="188.4" transform="rotate(-90 857.57 188.4)">P0.7</text>
<polyline class="w" points="678.39,163.57 678.39,187.83 581.24,187.83 581.24,212.09"/>
<line class="w" x1="568.94" y1="212.09" x2="593.53" y2="212.09"/>
<line class="w" x1="574.94" y1="218.09" x2="587.53" y2="218.09"/>
<line class="w" x1="579.84" y1="223.89" x2="582.63" y2="223.89"/>
<circle class="d" cx="605.52" cy="187.83" r="3.6"/>
<polyline class="w" points="690.54,163.57 690.54,199.96"/>
<polygon class="tri" points="684.54,199.96 690.54,211.96 696.54,199.96"/>
<line class="w" x1="690.54" y1="199.96" x2="690.54" y2="211.96"/>
<polyline class="w" points="702.68,163.57 702.68,272.74 641.96,272.74 641.96,255.48"/>
<polyline class="w" points="605.52,187.83 605.52,248.48"/>
<polyline class="p" points="605.52,248.48 678.39,248.48"/>
<rect class="r" x="623.16" y="243.88" width="37.6" height="9.6"/>
<polygon fill="#063C0E" points="641.96,253.68 639.56,258.88 644.36,258.88"/>
<text class="pct" x="641.96" y="251.68" text-anchor="middle">50%</text>
<text class="g" x="618.2" y="214">RV4</text>
<text class="s" x="618.2" y="228.2">3.3k</text>
<circle class="ind" cx="629" cy="234" r="4.7"/>
<path class="indm" d="M627.7 231.5 q-1.5 2.5 0 5 M630.3 231.5 q1.5 2.5 0 5"/>
<circle class="ind" cx="655.8" cy="234" r="4.7"/>
<path class="indm" d="M654.5 231.5 q-1.5 2.5 0 5 M657.1 231.5 q1.5 2.5 0 5"/>
<text class="c" x="724.6" y="246.2">LCD1602显示屏</text>
<polyline class="w" points="853.6,321.26 909.15,321.26 909.15,466.82"/>
<line class="w" x1="896.85" y1="466.82" x2="921.45" y2="466.82"/>
<line class="w" x1="902.85" y1="472.82" x2="915.45" y2="472.82"/>
<line class="w" x1="907.75" y1="478.62" x2="910.55" y2="478.62"/>
<polyline class="w" points="763.41,321.26 795,321.26"/>
<circle class="d" cx="763.41" cy="321.26" r="3.6"/>
<polyline class="p" points="795,321.26 806.13,321.26"/>
<polyline class="p" points="842.73,321.26 853.6,321.26"/>
<circle class="oc" cx="809.83" cy="321.26" r="3.6"/>
<circle class="oc" cx="839.03" cy="321.26" r="3.6"/>
<rect class="r" x="814.53" y="305.26" width="19.8" height="6.2"/>
<line class="p" x1="806.23" y1="311.56" x2="842.03" y2="311.56"/>
<circle class="ind" cx="848.83" cy="309.86" r="4.7"/>
<path class="indm" d="M847.53 307.36 q-1.5 2.5 0 5 M850.13 307.36 q1.5 2.5 0 5"/>
<text class="s" x="776" y="317.86">P2.0</text>
<polyline class="w" points="763.41,357.65 795,357.65"/>
<circle class="d" cx="763.41" cy="357.65" r="3.6"/>
<polyline class="p" points="795,357.65 806.13,357.65"/>
<polyline class="p" points="842.73,357.65 853.6,357.65"/>
<circle class="oc" cx="809.83" cy="357.65" r="3.6"/>
<circle class="oc" cx="839.03" cy="357.65" r="3.6"/>
<rect class="r" x="814.53" y="341.65" width="19.8" height="6.2"/>
<line class="p" x1="806.23" y1="347.95" x2="842.03" y2="347.95"/>
<circle class="ind" cx="848.83" cy="346.25" r="4.7"/>
<path class="indm" d="M847.53 343.75 q-1.5 2.5 0 5 M850.13 343.75 q1.5 2.5 0 5"/>
<polyline class="w" points="853.6,357.65 909.15,357.65"/>
<circle class="d" cx="909.15" cy="357.65" r="3.6"/>
<text class="s" x="776" y="354.25">P2.1</text>
<polyline class="w" points="763.41,394.04 795,394.04"/>
<circle class="d" cx="763.41" cy="394.04" r="3.6"/>
<polyline class="p" points="795,394.04 806.13,394.04"/>
<polyline class="p" points="842.73,394.04 853.6,394.04"/>
<circle class="oc" cx="809.83" cy="394.04" r="3.6"/>
<circle class="oc" cx="839.03" cy="394.04" r="3.6"/>
<rect class="r" x="814.53" y="378.04" width="19.8" height="6.2"/>
<line class="p" x1="806.23" y1="384.34" x2="842.03" y2="384.34"/>
<circle class="ind" cx="848.83" cy="382.64" r="4.7"/>
<path class="indm" d="M847.53 380.14 q-1.5 2.5 0 5 M850.13 380.14 q1.5 2.5 0 5"/>
<polyline class="w" points="853.6,394.04 909.15,394.04"/>
<circle class="d" cx="909.15" cy="394.04" r="3.6"/>
<text class="s" x="776" y="390.64">P2.2</text>
<polyline class="w" points="763.41,430.43 795,430.43"/>
<circle class="d" cx="763.41" cy="430.43" r="3.6"/>
<polyline class="p" points="795,430.43 806.13,430.43"/>
<polyline class="p" points="842.73,430.43 853.6,430.43"/>
<circle class="oc" cx="809.83" cy="430.43" r="3.6"/>
<circle class="oc" cx="839.03" cy="430.43" r="3.6"/>
<rect class="r" x="814.53" y="414.43" width="19.8" height="6.2"/>
<line class="p" x1="806.23" y1="420.73" x2="842.03" y2="420.73"/>
<circle class="ind" cx="848.83" cy="419.03" r="4.7"/>
<path class="indm" d="M847.53 416.53 q-1.5 2.5 0 5 M850.13 416.53 q1.5 2.5 0 5"/>
<polyline class="w" points="853.6,430.43 909.15,430.43"/>
<circle class="d" cx="909.15" cy="430.43" r="3.6"/>
<text class="s" x="776" y="427.03">P2.3</text>
<text class="c" x="935.6" y="330.6">设置</text>
<text class="c" x="914.4" y="367">加/洗手间灯</text>
<text class="c" x="924" y="403.4">减/客厅灯</text>
<text class="c" x="937.6" y="439.8">卧室灯</text>
<text class="c" x="781.6" y="488.6">独立按键</text>
<text class="c" x="157.2" y="451.8">单片机最小系统</text>
<polyline class="w" points="484.07,600.25 520.51,600.25"/>
<circle class="d" cx="484.07" cy="600.25" r="3.6"/>
<text class="s" x="497.68" y="597.25">P1.5</text>
<polyline class="p" points="520.51,600.25 532.27,600.25"/>
<polyline class="p" points="569.47,600.25 581.24,600.25"/>
<rect class="r" x="532.27" y="595.35" width="37.2" height="9.8"/>
<text class="g" x="532.87" y="590.95">R2</text>
<text class="s" x="533.07" y="616.25">1k</text>
<polygon class="tri" points="635.96,515.34 641.96,503.34 647.96,515.34"/>
<line class="w" x1="641.96" y1="515.34" x2="641.96" y2="503.34"/>
<polyline class="w" points="641.96,515.34 641.96,563.86"/>
<polyline class="p" points="641.96,563.86 641.96,575.99 624.06,593.65"/>
<polyline class="p" points="605.52,600.25 617.36,600.25"/>
<polyline class="w" points="581.24,600.25 605.52,600.25"/>
<rect class="r" x="617.36" y="581.65" width="6.7" height="37.2"/>
<polyline class="p" points="624.06,607.65 641.96,624.51 641.96,636.64"/>
<polygon class="ah" points="624.66,606.45 635.26,610.45 629.86,617.85"/>
<polyline class="w" points="641.96,636.64 641.96,660.9"/>
<text class="g" x="649.56" y="589.65">Q2</text>
<text class="s" x="649.56" y="604.05">PNP</text>
<polyline class="p" points="641.96,660.9 641.96,709.42"/>
<circle class="led" cx="641.96" cy="685.16" r="14.1"/>
<path class="ledm" d="M641.96 673.16 V697.16 M634.76 680.56 h14.4 l-7.2 10.2 z M635.26 691.56 h13.4"/>
<text class="g" x="664.56" y="683.76">D2</text>
<text class="s" x="664.36" y="698.56">LED-RED</text>
<polyline class="w" points="641.96,709.42 641.96,733.68"/>
<line class="w" x1="629.66" y1="733.68" x2="654.26" y2="733.68"/>
<line class="w" x1="635.66" y1="739.68" x2="648.26" y2="739.68"/>
<line class="w" x1="640.56" y1="745.48" x2="643.36" y2="745.48"/>
<polyline class="w" points="702.68,600.25 739.12,600.25"/>
<circle class="d" cx="702.68" cy="600.25" r="3.6"/>
<text class="s" x="716.28" y="597.25">P1.6</text>
<polyline class="p" points="739.12,600.25 750.88,600.25"/>
<polyline class="p" points="788.08,600.25 799.85,600.25"/>
<rect class="r" x="750.88" y="595.35" width="37.2" height="9.8"/>
<text class="g" x="751.48" y="590.95">R3</text>
<text class="s" x="751.68" y="616.25">1k</text>
<polygon class="tri" points="854.57,515.34 860.57,503.34 866.57,515.34"/>
<line class="w" x1="860.57" y1="515.34" x2="860.57" y2="503.34"/>
<polyline class="w" points="860.57,515.34 860.57,563.86"/>
<polyline class="p" points="860.57,563.86 860.57,575.99 842.67,593.65"/>
<polyline class="p" points="824.13,600.25 835.97,600.25"/>
<polyline class="w" points="799.85,600.25 824.13,600.25"/>
<rect class="r" x="835.97" y="581.65" width="6.7" height="37.2"/>
<polyline class="p" points="842.67,607.65 860.57,624.51 860.57,636.64"/>
<polygon class="ah" points="843.27,606.45 853.87,610.45 848.47,617.85"/>
<polyline class="w" points="860.57,636.64 860.57,660.9"/>
<text class="g" x="868.17" y="589.65">Q1</text>
<text class="s" x="868.17" y="604.05">PNP</text>
<polyline class="p" points="860.57,660.9 860.57,709.42"/>
<circle class="led" cx="860.57" cy="685.16" r="14.1"/>
<path class="ledm" d="M860.57 673.16 V697.16 M853.37 680.56 h14.4 l-7.2 10.2 z M853.87 691.56 h13.4"/>
<text class="g" x="883.17" y="683.76">D1</text>
<text class="s" x="882.97" y="698.56">LED-RED</text>
<polyline class="w" points="860.57,709.42 860.57,733.68"/>
<line class="w" x1="848.27" y1="733.68" x2="872.87" y2="733.68"/>
<line class="w" x1="854.27" y1="739.68" x2="866.87" y2="739.68"/>
<line class="w" x1="859.17" y1="745.48" x2="861.97" y2="745.48"/>
<polyline class="w" points="909.15,600.25 945.58,600.25"/>
<circle class="d" cx="909.15" cy="600.25" r="3.6"/>
<text class="s" x="922.75" y="597.25">P1.7</text>
<polyline class="p" points="945.58,600.25 957.35,600.25"/>
<polyline class="p" points="994.55,600.25 1006.31,600.25"/>
<rect class="r" x="957.35" y="595.35" width="37.2" height="9.8"/>
<text class="g" x="957.95" y="590.95">R4</text>
<text class="s" x="958.15" y="616.25">1k</text>
<polygon class="tri" points="1061.03,515.34 1067.03,503.34 1073.03,515.34"/>
<line class="w" x1="1067.03" y1="515.34" x2="1067.03" y2="503.34"/>
<polyline class="w" points="1067.03,515.34 1067.03,563.86"/>
<polyline class="p" points="1067.03,563.86 1067.03,575.99 1049.13,593.65"/>
<polyline class="p" points="1030.6,600.25 1042.43,600.25"/>
<polyline class="w" points="1006.31,600.25 1030.6,600.25"/>
<rect class="r" x="1042.43" y="581.65" width="6.7" height="37.2"/>
<polyline class="p" points="1049.13,607.65 1067.03,624.51 1067.03,636.64"/>
<polygon class="ah" points="1049.73,606.45 1060.33,610.45 1054.93,617.85"/>
<polyline class="w" points="1067.03,636.64 1067.03,660.9"/>
<text class="g" x="1074.63" y="589.65">Q3</text>
<text class="s" x="1074.63" y="604.05">PNP</text>
<polyline class="p" points="1067.03,660.9 1067.03,709.42"/>
<circle class="led" cx="1067.03" cy="685.16" r="14.1"/>
<path class="ledm" d="M1067.03 673.16 V697.16 M1059.83 680.56 h14.4 l-7.2 10.2 z M1060.33 691.56 h13.4"/>
<text class="g" x="1089.63" y="683.76">D3</text>
<text class="s" x="1089.43" y="698.56">LED-RED</text>
<polyline class="w" points="1067.03,709.42 1067.03,733.68"/>
<line class="w" x1="1054.73" y1="733.68" x2="1079.33" y2="733.68"/>
<line class="w" x1="1060.73" y1="739.68" x2="1073.33" y2="739.68"/>
<line class="w" x1="1065.63" y1="745.48" x2="1068.43" y2="745.48"/>
<polyline class="w" points="20.3,595 66.6,595"/>
<circle class="d" cx="20.3" cy="595" r="3.6"/>
<polyline class="p" points="66.6,595 83.4,595"/>
<polyline class="p" points="88.8,596.3 107,605.4"/>
<polyline class="p" points="112.4,582.1 128.5,582.1"/>
<polyline class="p" points="112.4,606.6 128.5,606.6"/>
<circle class="oc" cx="86.3" cy="595" r="2.8"/>
<circle class="oc" cx="109.5" cy="582.1" r="2.8"/>
<circle class="oc" cx="109.5" cy="606.6" r="2.8"/>
<polyline class="w" points="128.5,582.1 166.1,582.1"/>
<polygon class="tri" points="166.1,576.5 177.7,582.1 166.1,587.7"/>
<line class="w" x1="166.1" y1="582.1" x2="177.7" y2="582.1"/>
<polyline class="w" points="128.5,606.6 166.1,606.6"/>
<line class="w" x1="166.1" y1="594.3" x2="166.1" y2="618.9"/>
<line class="w" x1="172.1" y1="600.3" x2="172.1" y2="612.9"/>
<line class="w" x1="177.9" y1="605.2" x2="177.9" y2="608"/>
<circle class="ind" cx="120.1" cy="588.3" r="4.8"/>
<path class="indm" d="M118.8 585.8 q-1.5 2.5 0 5 M121.4 585.8 q1.5 2.5 0 5"/>
<circle class="ind" cx="120.1" cy="600.5" r="4.8"/>
<path class="indm" d="M118.8 598 q-1.5 2.5 0 5 M121.4 598 q1.5 2.5 0 5"/>
<text class="g" x="81" y="576.2">SW1</text>
<text class="s" x="32.8" y="591.8">P1.1</text>
<text class="s" x="81" y="620.2">SW-SPDT</text>
<text class="c" x="62.6" y="677.6">光敏模块</text>
<rect class="hl" x="298" y="561" width="34.5" height="19.6"/>
<polyline class="w" points="238.7,595 285,595"/>
<circle class="d" cx="238.7" cy="595" r="3.6"/>
<polyline class="p" points="285,595 301.8,595"/>
<polyline class="p" points="307.2,596.3 325.4,605.4"/>
<polyline class="p" points="330.8,582.1 346.9,582.1"/>
<polyline class="p" points="330.8,606.6 346.9,606.6"/>
<circle class="oc" cx="304.7" cy="595" r="2.8"/>
<circle class="oc" cx="327.9" cy="582.1" r="2.8"/>
<circle class="oc" cx="327.9" cy="606.6" r="2.8"/>
<polyline class="w" points="346.9,582.1 384.5,582.1"/>
<polygon class="tri" points="384.5,576.5 396.1,582.1 384.5,587.7"/>
<line class="w" x1="384.5" y1="582.1" x2="396.1" y2="582.1"/>
<polyline class="w" points="346.9,606.6 384.5,606.6"/>
<line class="w" x1="384.5" y1="594.3" x2="384.5" y2="618.9"/>
<line class="w" x1="390.5" y1="600.3" x2="390.5" y2="612.9"/>
<line class="w" x1="396.3" y1="605.2" x2="396.3" y2="608"/>
<circle class="ind" cx="338.5" cy="588.3" r="4.8"/>
<path class="indm" d="M337.2 585.8 q-1.5 2.5 0 5 M339.8 585.8 q1.5 2.5 0 5"/>
<circle class="ind" cx="338.5" cy="600.5" r="4.8"/>
<path class="indm" d="M337.2 598 q-1.5 2.5 0 5 M339.8 598 q1.5 2.5 0 5"/>
<text class="g" x="298.2" y="576.2">SW2</text>
<text class="s" x="251.2" y="591.8">P1.0</text>
<text class="s" x="298.2" y="620.2">SW-SPDT</text>
<text class="c" x="282" y="677.6">人体红外</text>
<g stroke="#24249c" stroke-width="1.4" fill="none"><circle cx="544.8" cy="418.5" r="3.7"/><path d="M538.4 418.5h12.8M544.8 412.2v12.6"/></g>
<polygon points="176.6,527.4 176.6,543.8 180.2,540.7 183.5,545.9 186.3,544.4 183.4,539.7 188.2,538.9" fill="#fbfbfb" stroke="#2a2a2a" stroke-width="1.1" stroke-linejoin="round"/>
<g class="wm"><text x="0" y="0" transform="translate(8.4 76.8) scale(1.075 1)">M</text><text x="0" y="0" transform="translate(63.77 76.8) scale(0.798 1)">C</text><text x="0" y="0" transform="translate(100.2 76.8) scale(0.940 1)">U</text><text x="0" y="0" transform="translate(144.55 76.8) scale(0.870 1)">c</text><text x="0" y="0" transform="translate(175.38 76.8) scale(0.982 1)">l</text><text x="0" y="0" transform="translate(191.71 76.8) scale(0.830 1)">u</text><text x="0" y="0" transform="translate(222.66 76.8) scale(0.913 1)">b</text></g>
</g>
</svg>
</body></html>
